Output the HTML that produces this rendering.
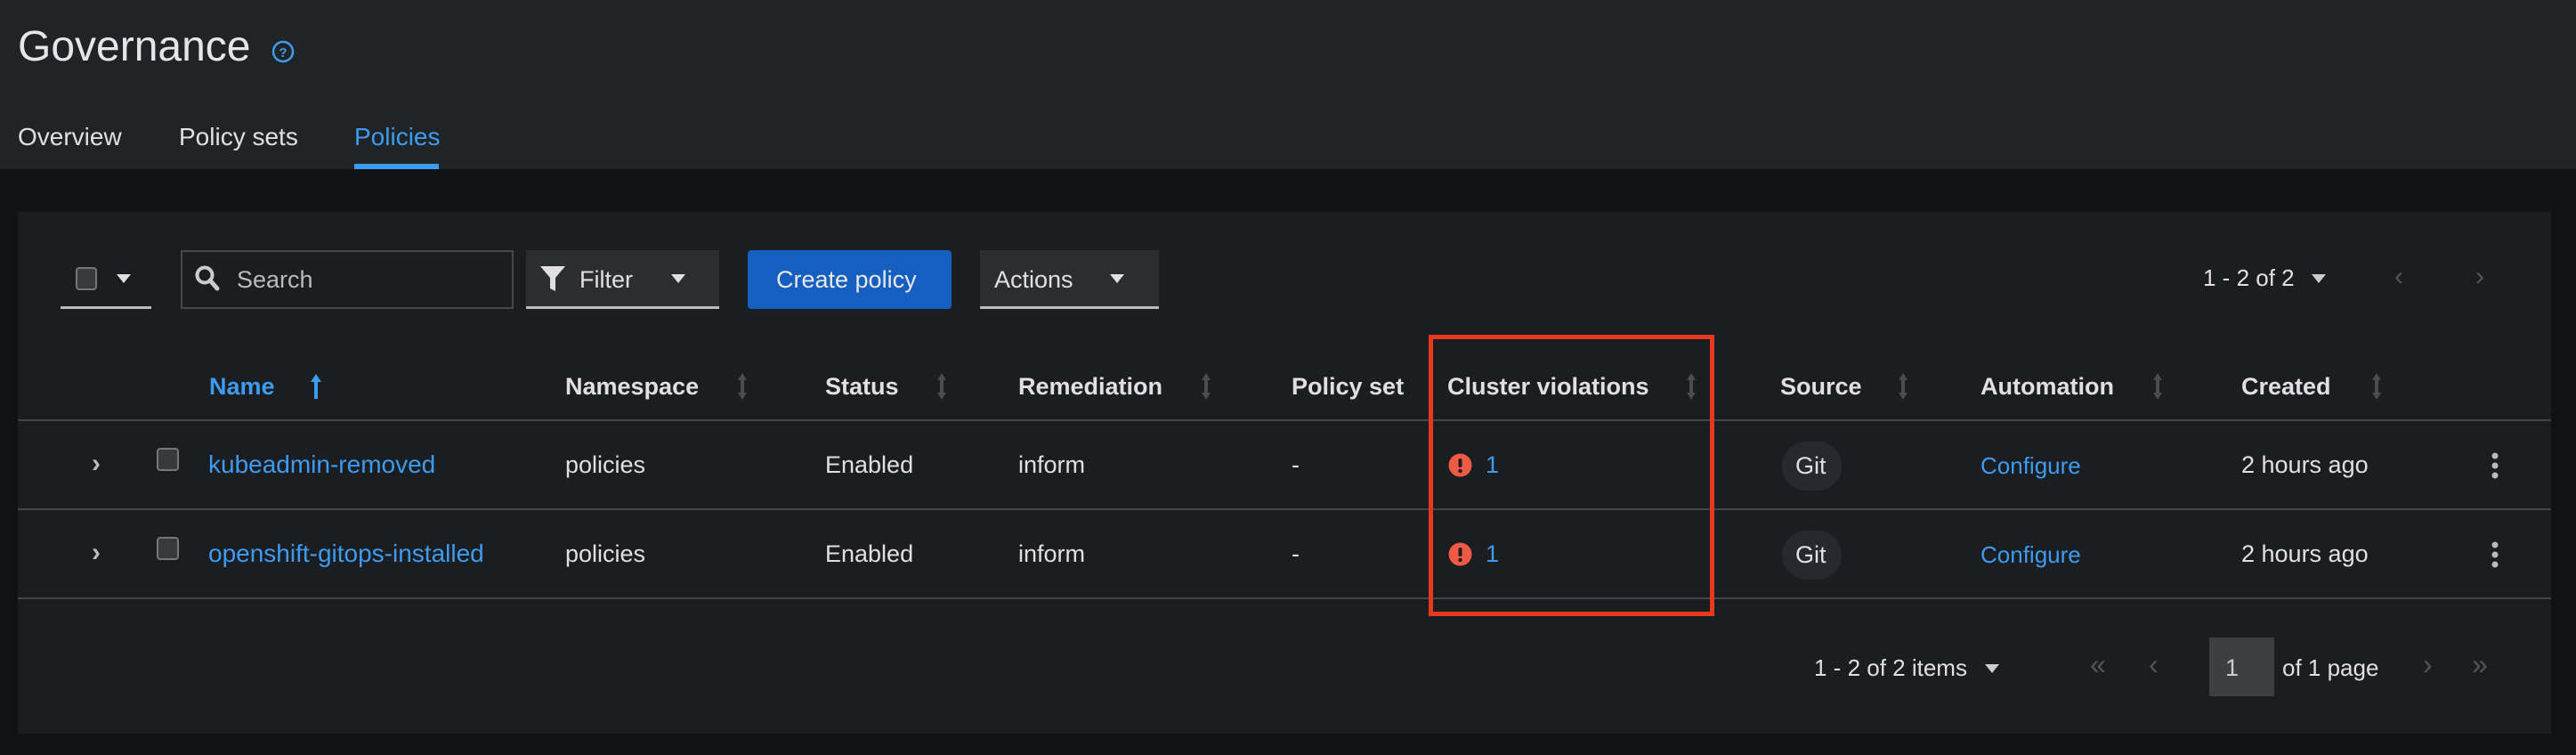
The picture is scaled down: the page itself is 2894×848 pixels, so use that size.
<!DOCTYPE html>
<html><head><meta charset="utf-8"><style>
*{margin:0;padding:0;box-sizing:border-box}
body{width:2894px;height:848px;background:#111214;font-family:"Liberation Sans",sans-serif;color:#e0e0e0;position:relative;overflow:hidden}
.a{position:absolute;white-space:nowrap}
.t{font-size:27px;line-height:32px}
.b{font-weight:bold}
.l{color:#3d9bf0}
.sort{position:absolute;width:4px;height:30px}
</style></head><body>
<div class="a" style="left:0;top:0;width:2894px;height:190px;background:#212427"></div>
<div class="a" style="left:20px;top:26px;font-size:48px;line-height:54px;color:#e6e6e6">Governance</div>
<svg class="a" style="left:305px;top:45px" width="26" height="26" viewBox="0 0 26 26"><circle cx="13" cy="13" r="11" fill="none" stroke="#3d9bf0" stroke-width="2.5"/><text x="13" y="19" font-size="15" font-weight="bold" fill="#3d9bf0" text-anchor="middle" font-family="Liberation Sans">?</text></svg>
<div class="a" style="left:20px;top:137px;font-size:28px;line-height:34px">Overview</div>
<div class="a" style="left:201px;top:137px;font-size:28px;line-height:34px">Policy sets</div>
<div class="a" style="left:398px;top:137px;font-size:28px;line-height:34px;color:#3d9bf0">Policies</div>
<div class="a" style="left:398px;top:184px;width:95px;height:6px;background:#3d9bf0"></div>

<div class="a" style="left:20px;top:238px;width:2846px;height:586px;background:#1b1d21"></div>
<!-- toolbar -->
<div class="a" style="left:85px;top:300px;width:24px;height:26px;border:2px solid #777;border-radius:4px;background:#38393c"></div>
<div class="a" style="left:131px;top:308px;width:0;height:0;border-left:8px solid transparent;border-right:8px solid transparent;border-top:10px solid #e0e0e0"></div>
<div class="a" style="left:68px;top:344px;width:102px;height:3px;background:#bbb"></div>
<div class="a" style="left:203px;top:281px;width:374px;height:66px;border:2px solid #46484c;background:#1b1d21"></div>
<svg class="a" style="left:218px;top:297px" width="30" height="32" viewBox="0 0 30 32"><circle cx="12" cy="12" r="8.5" fill="none" stroke="#ccc" stroke-width="4"/><path d="M18 18 L26 27" stroke="#ccc" stroke-width="5" stroke-linecap="round"/></svg>
<div class="a t" style="left:266px;top:298px;color:#bbb">Search</div>
<div class="a" style="left:591px;top:281px;width:217px;height:66px;background:#2c2d31;border-bottom:3px solid #bbb"></div>
<svg class="a" style="left:606px;top:298px" width="30" height="30" viewBox="0 0 30 30"><path d="M1 1 H29 L18 14 V29 L12 26 V14 Z" fill="#e0e0e0"/></svg>
<div class="a t" style="left:651px;top:298px">Filter</div>
<div class="a" style="left:754px;top:308px;border-left:8px solid transparent;border-right:8px solid transparent;border-top:10px solid #e0e0e0"></div>
<div class="a" style="left:840px;top:281px;width:229px;height:66px;background:#145fc0;border-radius:4px"></div>
<div class="a t" style="left:872px;top:298px;color:#e8e8e8">Create policy</div>
<div class="a" style="left:1101px;top:281px;width:201px;height:66px;background:#2c2d31;border-bottom:3px solid #bbb"></div>
<div class="a t" style="left:1117px;top:298px">Actions</div>
<div class="a" style="left:1247px;top:308px;border-left:8px solid transparent;border-right:8px solid transparent;border-top:10px solid #e0e0e0"></div>
<div class="a" style="left:2475px;top:296px;font-size:26px;line-height:32px">1 - 2 of 2</div>
<div class="a" style="left:2597px;top:308px;border-left:8px solid transparent;border-right:8px solid transparent;border-top:10px solid #ccc"></div>
<div class="a" style="left:2690px;top:294px;font-size:30px;color:#555">‹</div>
<div class="a" style="left:2781px;top:294px;font-size:30px;color:#555">›</div>

<!-- header row -->
<div class="a t b l" style="left:235px;top:418px">Name</div>
<svg class="a" style="left:348px;top:419px" width="14" height="30" viewBox="0 0 14 30"><path d="M7 1 L13 10 H9 V29 H5 V10 H1 Z" fill="#3d9bf0"/></svg>
<div class="a t b" style="left:635px;top:418px">Namespace</div>
<div class="a t b" style="left:927px;top:418px">Status</div>
<div class="a t b" style="left:1144px;top:418px">Remediation</div>
<div class="a t b" style="left:1451px;top:418px">Policy set</div>
<div class="a t b" style="left:1626px;top:418px">Cluster violations</div>
<div class="a t b" style="left:2000px;top:418px">Source</div>
<div class="a t b" style="left:2225px;top:418px">Automation</div>
<div class="a t b" style="left:2518px;top:418px">Created</div>
<svg width="0" height="0"><defs><g id="s"><path d="M5 0 L10 8 H7 V22 H10 L5 30 L0 22 H3 V8 H0 Z" fill="#4a4c50"/></g></defs></svg>
<svg class="a" style="left:829px;top:419px" width="10" height="30"><use href="#s"/></svg>
<svg class="a" style="left:1053px;top:419px" width="10" height="30"><use href="#s"/></svg>
<svg class="a" style="left:1350px;top:419px" width="10" height="30"><use href="#s"/></svg>
<svg class="a" style="left:1895px;top:419px" width="10" height="30"><use href="#s"/></svg>
<svg class="a" style="left:2133px;top:419px" width="10" height="30"><use href="#s"/></svg>
<svg class="a" style="left:2419px;top:419px" width="10" height="30"><use href="#s"/></svg>
<svg class="a" style="left:2665px;top:419px" width="10" height="30"><use href="#s"/></svg>
<div class="a" style="left:20px;top:471px;width:2846px;height:2px;background:#444548"></div>
<div class="a" style="left:20px;top:571px;width:2846px;height:2px;background:#444548"></div>
<div class="a" style="left:20px;top:671px;width:2846px;height:2px;background:#444548"></div>

<!-- row 1 -->
<div class="a" style="left:103px;top:504px;font-size:30px;color:#bbb;font-weight:bold">›</div>
<div class="a" style="left:176px;top:503px;width:25px;height:26px;border:2px solid #777;border-radius:4px;background:#38393c"></div>
<div class="a t l" style="left:234px;top:506px;font-size:28px">kubeadmin-removed</div>
<div class="a t" style="left:635px;top:506px">policies</div>
<div class="a t" style="left:927px;top:506px">Enabled</div>
<div class="a t" style="left:1144px;top:506px">inform</div>
<div class="a t" style="left:1451px;top:506px">-</div>
<svg class="a" style="left:1627px;top:509px" width="27" height="27" viewBox="0 0 27 27"><circle cx="13.5" cy="13.5" r="13" fill="#ef5a44"/><rect x="11.5" y="6" width="4" height="10" rx="2" fill="#1b1d21"/><circle cx="13.5" cy="20" r="2.2" fill="#1b1d21"/></svg>
<div class="a t l" style="left:1669px;top:506px">1</div>
<div class="a" style="left:2002px;top:496px;width:67px;height:55px;border-radius:28px;background:#26292d"></div>
<div class="a t" style="left:2017px;top:507px">Git</div>
<div class="a t l" style="left:2225px;top:507px;font-size:26px">Configure</div>
<div class="a t" style="left:2518px;top:506px">2 hours ago</div>
<svg class="a" style="left:2797px;top:508px" width="12" height="30"><circle cx="6" cy="4" r="3.5" fill="#bbb"/><circle cx="6" cy="15" r="3.5" fill="#bbb"/><circle cx="6" cy="26" r="3.5" fill="#bbb"/></svg>

<!-- row 2 -->
<div class="a" style="left:103px;top:604px;font-size:30px;color:#bbb;font-weight:bold">›</div>
<div class="a" style="left:176px;top:603px;width:25px;height:26px;border:2px solid #777;border-radius:4px;background:#38393c"></div>
<div class="a t l" style="left:234px;top:606px;font-size:28px">openshift-gitops-installed</div>
<div class="a t" style="left:635px;top:606px">policies</div>
<div class="a t" style="left:927px;top:606px">Enabled</div>
<div class="a t" style="left:1144px;top:606px">inform</div>
<div class="a t" style="left:1451px;top:606px">-</div>
<svg class="a" style="left:1627px;top:609px" width="27" height="27" viewBox="0 0 27 27"><circle cx="13.5" cy="13.5" r="13" fill="#ef5a44"/><rect x="11.5" y="6" width="4" height="10" rx="2" fill="#1b1d21"/><circle cx="13.5" cy="20" r="2.2" fill="#1b1d21"/></svg>
<div class="a t l" style="left:1669px;top:606px">1</div>
<div class="a" style="left:2002px;top:596px;width:67px;height:55px;border-radius:28px;background:#26292d"></div>
<div class="a t" style="left:2017px;top:607px">Git</div>
<div class="a t l" style="left:2225px;top:607px;font-size:26px">Configure</div>
<div class="a t" style="left:2518px;top:606px">2 hours ago</div>
<svg class="a" style="left:2797px;top:608px" width="12" height="30"><circle cx="6" cy="4" r="3.5" fill="#bbb"/><circle cx="6" cy="15" r="3.5" fill="#bbb"/><circle cx="6" cy="26" r="3.5" fill="#bbb"/></svg>

<!-- red box -->
<div class="a" style="left:1605px;top:376px;width:321px;height:316px;border:5px solid #e8391f"></div>

<!-- bottom pagination -->
<div class="a" style="left:2038px;top:734px;font-size:26px;line-height:32px">1 - 2 of 2 items</div>
<div class="a" style="left:2230px;top:746px;border-left:8px solid transparent;border-right:8px solid transparent;border-top:10px solid #ccc"></div>
<div class="a" style="left:2348px;top:728px;font-size:32px;color:#555">«</div>
<div class="a" style="left:2414px;top:728px;font-size:32px;color:#555">‹</div>
<div class="a" style="left:2482px;top:716px;width:73px;height:66px;background:#3c3f42"></div>
<div class="a t" style="left:2500px;top:734px;color:#ccc">1</div>
<div class="a" style="left:2564px;top:734px;font-size:26px;line-height:32px">of 1 page</div>
<div class="a" style="left:2722px;top:728px;font-size:32px;color:#555">›</div>
<div class="a" style="left:2777px;top:728px;font-size:32px;color:#555">»</div>
</body></html>
